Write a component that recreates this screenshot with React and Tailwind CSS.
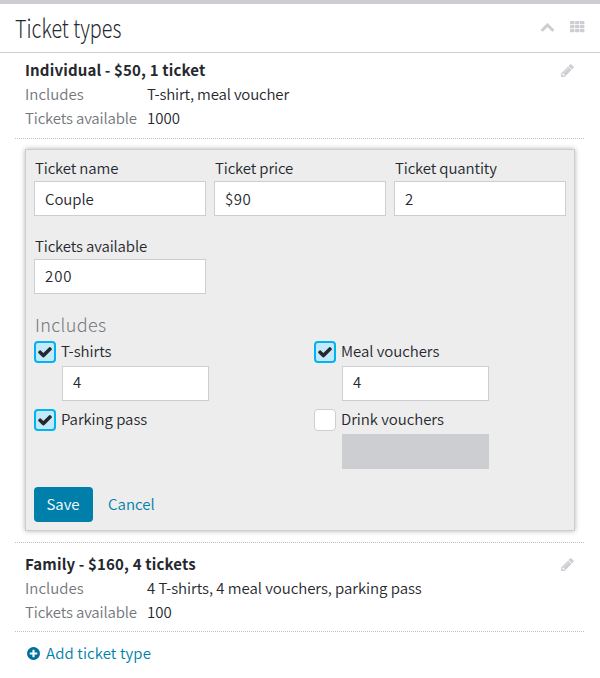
const PATHS = {
  chevron:
    "M1683 1331l-166 165q-19 19-45 19t-45-19l-531-531-531 531q-19 19-45 19t-45-19l-166-165q-19-19-19-45.500t19-45.500l742-741q19-19 45-19t45 19l742 741q19 19 19 45.500t-19 45.500z",
  check:
    "M1671 566q0 40-28 68l-724 724-136 136q-28 28-68 28t-68-28l-136-136-362-362q-28-28-28-68t28-68l136-136q28-28 68-28t68 28l294 295 656-657q28-28 68-28t68 28l136 136q28 28 28 68z",
  pencil:
    "M491 1536l91-91-235-235-91 91v107h128v128h107zM1014 608q0-22-22-22-10 0-17 7l-542 542q-7 7-7 17 0 22 22 22 10 0 17-7l542-542q7-7 7-17zM960 416l416 416-832 832h-416v-416zM1643 512q0 53-37 90l-166 166-416-416 166-165q36-38 90-38 53 0 91 38l235 234q37 39 37 91z",
  plus:
    "M1344 960v-128q0-26-19-45t-45-19h-256v-256q0-26-19-45t-45-19h-128q-26 0-45 19t-19 45v256h-256q-26 0-45 19t-19 45v128q0 26 19 45t45 19h256v256q0 26 19 45t45 19h128q26 0 45-19t19-45v-256h256q26 0 45-19t19-45zm320-64q0 209-103 385.500t-279.500 279.500-385.500 103-385.500-103-279.500-279.500-103-385.500 103-385.500 279.500-279.500 385.500-103 385.500 103 279.500 279.500 103 385.500z",
};

function Icon({ name, className }) {
  return (
    <svg viewBox="0 0 1792 1792" className={className} fill="currentColor">
      <path d={PATHS[name]} />
    </svg>
  );
}

function GridIcon({ className }) {
  return (
    <svg viewBox="0 0 15 12" className={className} fill="currentColor">
      {[0, 4, 8].map((y) =>
        [0, 5, 10].map((x) => (
          <rect key={x + "-" + y} x={x} y={y} width="4.4" height="3.2" rx="0.7" />
        ))
      )}
    </svg>
  );
}

function Ticket({ title, includes, available, includesClass }) {
  return (
    <section className="flex justify-between pl-[10px] pr-[9px]">
      <div>
        <h2 className="font-bold leading-6 tracking-[0.15px]">{title}</h2>
        <dl className="grid grid-cols-[122px_auto] leading-6">
          <dt className="text-[#74767c]">Includes</dt>
          <dd className={includesClass}>{includes}</dd>
          <dt className="tracking-[-0.15px] text-[#74767c]">Tickets available</dt>
          <dd>{available}</dd>
        </dl>
      </div>
      <Icon name="pencil" className="mt-[5px] size-[15px] text-[#cdced2]" />
    </section>
  );
}

function Field({ label, value, valueClass }) {
  return (
    <label className="block w-[172px]">
      <span className="block h-6 pl-px leading-[22px] tracking-[-0.14px]">{label}</span>
      <span className="flex h-[35px] items-center border border-[#cdced2] bg-white px-[10px]">
        <span className={valueClass}>{value}</span>
      </span>
    </label>
  );
}

function Option({ label, checked, value, disabled }) {
  return (
    <div className="w-[280px]">
      <div className="flex h-[22px] items-center gap-[5px]">
        {checked ? (
          <span className="flex size-[22px] items-center justify-center rounded-[4px] border-2 border-[#00b4f1] bg-[#c3e9fb]">
            <Icon name="check" className="size-[16px] text-[#25282e]" />
          </span>
        ) : (
          <span className="size-[22px] rounded-[4px] border border-[#cdced2] bg-white" />
        )}
        <span className="pb-[2px] leading-5 tracking-[-0.06px]">{label}</span>
      </div>
      {value && (
        <div className="ml-7 mt-[3px] flex h-[35px] w-[147px] items-center border border-[#cdced2] bg-white px-[10px] pb-[2px]">
          {value}
        </div>
      )}
      {disabled && <div className="ml-7 mt-[3px] h-[35px] w-[147px] bg-[#cdced2]" />}
    </div>
  );
}

export default function App() {
  return (
    <main className="h-[678px] w-[600px] overflow-hidden border-t-4 border-[#cdced2] bg-white font-['Noto_Sans_CJK_SC','Noto_Sans',sans-serif] text-[15px] font-[350] text-[#25282e]">
      <header className="flex h-[49px] items-center justify-between border-b border-[#cdced2] px-[15px]">
        <h1 className="origin-left scale-x-[0.79] pb-[2px] text-[25px] font-light leading-8">Ticket types</h1>
        <div className="flex items-center gap-[15px] text-[#cdced2]">
          <Icon name="chevron" className="-mt-[4px] size-[15px]" />
          <GridIcon className="-mt-[2px] h-[12px] w-[15px]" />
        </div>
      </header>
      <div className="pl-[15px] pr-4 pt-[5px]">
        <div className="h-[81px] border-b border-dotted border-[#bfc0c3]">
          <Ticket
            title="Individual - $50, 1 ticket"
            includes="T-shirt, meal voucher"
            includesClass="tracking-[-0.17px]"
            available="1000"
          />
        </div>
        <div className="h-[404px] border-b border-dotted border-[#bfc0c3] pl-[10px] pr-[9px] pt-[10px]">
          <form className="h-[382px] border border-[#cdced2] bg-[#ededed] pl-[8px] pt-[7px] shadow-[0_0_5px_rgba(0,0,0,0.3)]">
            <div className="flex gap-2">
              <Field label="Ticket name" value="Couple" valueClass="tracking-[-0.1px] pt-px" />
              <Field label="Ticket price" value="$90" valueClass="tracking-[0.5px] pt-px" />
              <Field label="Ticket quantity" value="2" valueClass="pt-px" />
            </div>
            <div className="mt-[19px]">
              <Field label="Tickets available" value="200" valueClass="tracking-[0.9px]" />
            </div>
            <h3 className="mt-[16px] pb-[2px] pl-px text-[18px] font-light leading-7 tracking-[0.35px] text-[#74767c]">Includes</h3>
            <div className="mt-px grid grid-cols-[280px_auto] gap-y-2">
              <Option label="T-shirts" checked value="4" />
              <Option label="Meal vouchers" checked value="4" />
              <Option label="Parking pass" checked />
              <Option label="Drink vouchers" disabled />
            </div>
            <div className="mt-[18px] flex items-center gap-[15px]">
              <button type="button" className="h-[35px] w-[59px] rounded-[4px] bg-[#007fab] pr-px text-white">Save</button>
              <a className="text-[#007fa8]">Cancel</a>
            </div>
          </form>
        </div>
        <div className="h-[89px] border-b border-dotted border-[#bfc0c3] pt-[9px]">
          <Ticket
            title="Family - $160, 4 tickets"
            includes="4 T-shirts, 4 meal vouchers, parking pass"
            includesClass="tracking-[-0.05px]"
            available="100"
          />
        </div>
        <a className="mt-[9px] flex items-center gap-[5px] pl-[11px] leading-6 text-[#007fa8]">
          <Icon name="plus" className="size-[15px] text-[#00709c]" />
          <span className="tracking-[0.1px]">Add ticket type</span>
        </a>
      </div>
    </main>
  );
}
